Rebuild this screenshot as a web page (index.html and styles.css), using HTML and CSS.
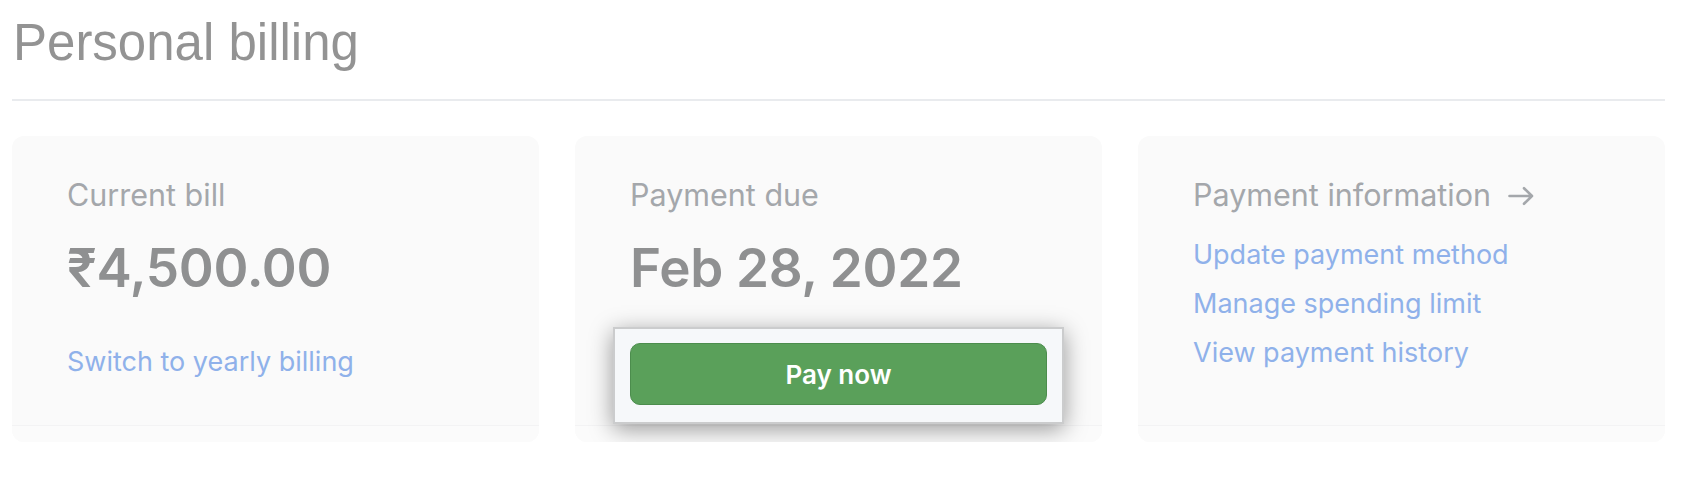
FILE: index.html
```html
<!DOCTYPE html>
<html lang="en">
<head>
<meta charset="utf-8">
<title>Personal billing</title>
<link rel="stylesheet" href="styles.css">
</head>
<body>
<main class="page">
  <header class="page-head">
    <h1 class="page-title">Personal billing</h1>
  </header>
  <section class="cards">
    <article class="card">
      <div class="card-body">
        <h2 class="card-label">Current bill</h2>
        <p class="card-value">₹4,500.00</p>
        <a class="card-link link-single" href="#">Switch to yearly billing</a>
      </div>
      <div class="card-foot"></div>
    </article>
    <article class="card">
      <div class="card-body">
        <h2 class="card-label">Payment due</h2>
        <p class="card-value">Feb 28, 2022</p>
        <div class="highlight">
          <button class="btn-pay" type="button">Pay now</button>
        </div>
      </div>
      <div class="card-foot"></div>
    </article>
    <article class="card">
      <div class="card-body">
        <h2 class="card-label label-arrow">Payment information
          <svg class="arrow" width="26" height="20" viewBox="0 0 26 20" aria-hidden="true"><path d="M1.5 10H24M16 2.2L24 10L16 17.8" fill="none" stroke="currentColor" stroke-width="2.6" stroke-linecap="round" stroke-linejoin="round"/></svg>
        </h2>
        <ul class="link-list">
          <li><a class="card-link" href="#">Update payment method</a></li>
          <li><a class="card-link" href="#">Manage spending limit</a></li>
          <li><a class="card-link" href="#">View payment history</a></li>
        </ul>
      </div>
      <div class="card-foot"></div>
    </article>
  </section>
</main>
</body>
</html>
```

FILE: styles.css
```css
* { box-sizing: border-box; }

html, body {
  margin: 0;
  padding: 0;
  background: #ffffff;
}

body {
  font-family: Inter, "Noto Sans", "DejaVu Sans", sans-serif;
}

.page {
  width: 1653px;
  margin-left: 12px;
  padding-top: 15px;
}

.page-head {
  padding-bottom: 28px;
  border-bottom: 2px solid #e9ebee;
}

.page-title {
  margin: 0 0 0 1px;
  font-family: "Liberation Sans", Arial, sans-serif;
  font-weight: 400;
  font-size: 51px;
  line-height: 56px;
  color: #939393;
}

.cards {
  display: grid;
  grid-template-columns: repeat(3, 1fr);
  gap: 36px;
  margin-top: 35px;
}

.card {
  display: flex;
  flex-direction: column;
  min-height: 306px;
  background: #fafafa;
  border-radius: 12px;
}

.card-body {
  flex: 1;
  display: flex;
  flex-direction: column;
  align-items: flex-start;
  padding: 40px 55px 0;
}

.card-foot {
  height: 17px;
  border-top: 1px solid #f3f3f4;
  border-radius: 0 0 12px 12px;
  background: #fbfbfb;
}

.card-label {
  margin: 0;
  font-size: 30.5px;
  line-height: 38px;
  font-weight: 400;
  color: #a4a7ab;
}

.label-arrow {
  display: flex;
  align-items: center;
  gap: 17px;
}

.arrow {
  display: block;
  color: #a4a7ab;
  margin-top: 2px;
}

.card-value {
  margin: 22px 0 0;
  font-size: 53px;
  line-height: 64px;
  font-weight: 600;
  color: #8f9091;
  letter-spacing: -0.3px;
}

.card-link {
  display: block;
  font-size: 27px;
  line-height: 40px;
  color: #8fb1ea;
  text-decoration: none;
}

.link-single {
  margin-top: 42px;
}

.link-list {
  list-style: none;
  margin: 21px 0 0;
  padding: 0;
  display: flex;
  flex-direction: column;
  gap: 9px;
}

.highlight {
  align-self: stretch;
  margin: 27px -17px 0;
  padding: 14px 15px 17px;
  background: #f6f8fa;
  border: 2px solid #cbcccd;
  box-shadow: 0 5px 22px rgba(0, 0, 0, 0.4);
  position: relative;
}

.btn-pay {
  display: block;
  width: 100%;
  height: 62px;
  border: 1px solid #4c8d4d;
  border-radius: 10px;
  background: #5aa05a;
  color: #ffffff;
  font-family: Inter, "Noto Sans", sans-serif;
  font-size: 26px;
  font-weight: 600;
  cursor: pointer;
}
```
